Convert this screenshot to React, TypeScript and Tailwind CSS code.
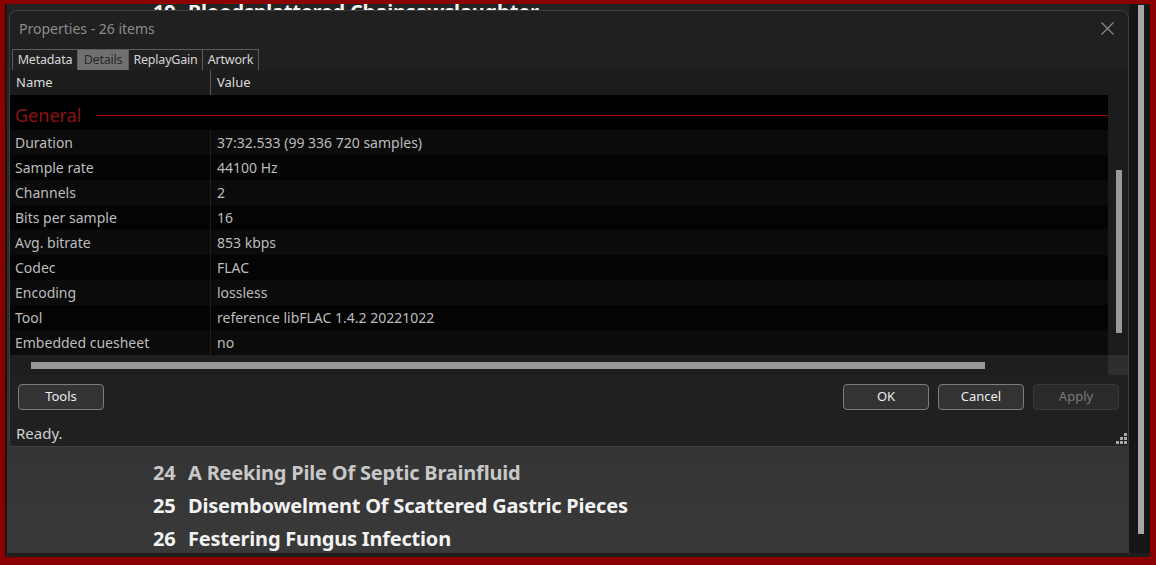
import React from 'react';

type Row = { name: string; value: string };

const rows: Row[] = [
  { name: 'Duration', value: '37:32.533 (99 336 720 samples)' },
  { name: 'Sample rate', value: '44100 Hz' },
  { name: 'Channels', value: '2' },
  { name: 'Bits per sample', value: '16' },
  { name: 'Avg. bitrate', value: '853 kbps' },
  { name: 'Codec', value: 'FLAC' },
  { name: 'Encoding', value: 'lossless' },
  { name: 'Tool', value: 'reference libFLAC 1.4.2 20221022' },
  { name: 'Embedded cuesheet', value: 'no' },
];

const tabs = [
  { label: 'Metadata', w: 'w-[65px]' },
  { label: 'Details', w: 'w-[51px]' },
  { label: 'ReplayGain', w: 'w-[74px]' },
  { label: 'Artwork', w: 'w-[57px]' },
];

const uiFont = { fontFamily: '"Noto Sans", "Open Sans", sans-serif' };
const listFont = { fontFamily: '"Noto Sans", "DejaVu Sans", sans-serif' };

const Track: React.FC<{ no: number; title: string; dim?: boolean }> = ({ no, title, dim }) => (
  <div
    className={`h-[33px] flex items-center pl-[146px] text-[20px] font-bold tracking-[-0.2px] ${dim ? 'text-[#c8c8c8]' : 'text-[#f2f2f2]'}`}
    style={listFont}
  >
    <span className="w-[35px]">{no}</span>
    <span>{title}</span>
  </div>
);

const DialogButton: React.FC<{ label: string; disabled?: boolean }> = ({ label, disabled }) => (
  <button
    type="button"
    className={
      disabled
        ? 'w-[86px] h-[26px] rounded-[4px] border border-[#3a3a3a] bg-[#2a2a2a] text-[13px] text-[#7a7a7a]'
        : 'w-[86px] h-[26px] rounded-[4px] border border-[#7c7c7c] bg-[#333333] text-[13px] text-[#ececec]'
    }
  >
    {label}
  </button>
);

const ResizeGrip = () => (
  <svg width="11" height="11" viewBox="0 0 11 11" fill="#a8a8a8">
    <rect x="8" y="0" width="3" height="3" />
    <rect x="4" y="4" width="3" height="3" />
    <rect x="8" y="4" width="3" height="3" />
    <rect x="0" y="8" width="3" height="3" />
    <rect x="4" y="8" width="3" height="3" />
    <rect x="8" y="8" width="3" height="3" />
  </svg>
);

export default function App() {
  return (
    <div className="w-[1156px] h-[565px] bg-[#8a0000] pt-[4px] pl-[5px] pr-[6px] pb-[8px] overflow-hidden">
      <div className="relative h-full flex bg-[#1e1e1e] pb-[4px]">
        {/* track list behind the dialog */}
        <div className="flex-1 h-full overflow-hidden border-l-[2px] border-[#151515] bg-gradient-to-b from-[#232323] via-[#2c2c2c] to-[#393939]">
          <div className="-mt-[9px]">
            <Track no={19} title="Bloodsplattered Chainsawslaughter" />
          </div>
          <div className="h-[428px]" />
          <Track no={24} title="A Reeking Pile Of Septic Brainfluid" dim />
          <Track no={25} title="Disembowelment Of Scattered Gastric Pieces" />
          <Track no={26} title="Festering Fungus Infection" />
        </div>

        {/* main scrollbar */}
        <div className="w-[21px] h-full bg-[#161616] flex pl-[9px]">
          <div className="w-[6px] h-[529px] mt-[1px] bg-[#a6a6a6]" />
        </div>

        {/* properties dialog */}
        <div
          className="absolute left-[4px] top-[6px] w-[1120px] h-[437px] rounded-t-[8px] rounded-b-[4px] border border-[#3e3e3e] bg-[#202020] flex flex-col"
          style={uiFont}
        >
          <div className="h-[38px] flex items-center justify-between pl-[9px] pr-[14px] pb-[4px]">
            <span className="text-[14px] text-[#8c8c8c]">Properties - 26 items</span>
            <svg width="13" height="13" viewBox="0 0 13 13" stroke="#8a8a8a" strokeWidth="1.2" className="mt-[1px]">
              <path d="M0.5 0.5 L12.5 12.5 M12.5 0.5 L0.5 12.5" />
            </svg>
          </div>

          <div className="flex pl-[2px] h-[21px]">
            {tabs.map((t, i) => (
              <div
                key={t.label}
                className={`${t.w} h-full flex items-center justify-center text-[12.5px] tracking-[-0.2px] border-t border-l border-[#5c5c5c] ${i === tabs.length - 1 ? 'border-r' : ''} ${t.label === 'Details' ? 'bg-[#707070] text-[#2a2a2a]' : 'text-[#d6d6d6]'}`}
              >
                {t.label}
              </div>
            ))}
          </div>

          {/* details table */}
          <div className="flex flex-col">
            <div className="flex h-[285px]">
              <div className="flex-1 flex flex-col">
                <div className="h-[25px] flex items-center bg-[#1c1c1c] text-[13px] text-[#dcdcdc]">
                  <div className="w-[201px] h-full flex items-center pl-[6px] border-r border-[#5a5a5a]">Name</div>
                  <div className="pl-[6px]">Value</div>
                </div>
                <div className="flex-1 bg-black">
                  <div className="h-[35px] flex items-center pl-[5px] pt-[5px]">
                    <span className="w-[81px] text-[18px] text-[#8e1212]">General</span>
                    <div className="flex-1 h-px bg-[#b80000]" />
                  </div>
                  {rows.map((r, i) => (
                    <div
                      key={r.name}
                      className={`h-[25px] flex items-center text-[14px] text-[#bdbdbd] ${i % 2 === 0 ? 'bg-[#0b0b0b]' : 'bg-[#040404]'}`}
                    >
                      <div className="w-[201px] h-full flex items-center pl-[5px] border-r border-[#1e1e1e]">{r.name}</div>
                      <div className="pl-[6px]">{r.value}</div>
                    </div>
                  ))}
                </div>
              </div>
              <div className="w-[20px] bg-[#1c1c1c] pt-[100px] pl-[8px]">
                <div className="w-[6px] h-[163px] bg-[#9a9a9a]" />
              </div>
            </div>
            <div className="h-[20px] flex bg-[#1e1e1e]">
              <div className="flex-1 pl-[21px] pt-[7px]">
                <div className="w-[954px] h-[7px] bg-[#999999]" />
              </div>
              <div className="w-[20px] bg-[#2e2e2e]" />
            </div>
          </div>

          <div className="flex items-center justify-between pl-[8px] pr-[9px] pt-[9px]">
            <DialogButton label="Tools" />
            <div className="flex gap-[9px]">
              <DialogButton label="OK" />
              <DialogButton label="Cancel" />
              <DialogButton label="Apply" disabled />
            </div>
          </div>

          <div className="flex-1 flex items-end justify-between pl-[6px] pr-[1px] pb-[2px]">
            <span className="text-[15px] text-[#d0d0d0]">Ready.</span>
            <ResizeGrip />
          </div>
        </div>
      </div>
    </div>
  );
}
